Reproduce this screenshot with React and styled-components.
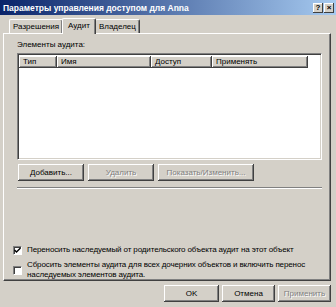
import React from 'react'
import styled, { createGlobalStyle } from 'styled-components'

const Global = createGlobalStyle`
  html, body {
    margin: 0;
    padding: 0;
    background: #d4d0c8;
  }
  body {
    width: 336px;
    height: 307px;
    overflow: hidden;
    font-family: 'Liberation Sans', Arial, sans-serif;
    font-size: 8px;
    color: #000;
  }
`

const raised = `
  box-shadow: inset -1px -1px #404040, inset 1px 1px #fff,
    inset -2px -2px #808080, inset 2px 2px #d4d0c8;
`

const Window = styled.div`
  display: flex;
  flex-direction: column;
  width: 336px;
  height: 307px;
  background: #d4d0c8;
`

const TitleBar = styled.div`
  display: flex;
  align-items: center;
  height: 15px;
  padding: 0 2px 0 3px;
  background: linear-gradient(to right, #0a246a, #a6caf0);
  color: #fff;
  font-weight: bold;
  font-size: 8.5px;
`

const TitleText = styled.span`
  flex: 1;
  white-space: nowrap;
`

const TitleButtons = styled.div`
  display: flex;
  gap: 1px;
`

const TitleButton = styled.div`
  width: 10px;
  height: 10px;
  background: #d4d0c8;
  color: #000;
  font-size: 8px;
  font-weight: bold;
  line-height: 10px;
  text-align: center;
  box-shadow: inset -1px -1px #404040, inset 1px 1px #fff;
`

const TabRow = styled.div`
  display: flex;
  align-items: flex-end;
  height: 18px;
  padding-left: 9px;
`

const Tab = styled.div`
  position: relative;
  height: ${(p) => (p.active ? 15 : 13)}px;
  padding: 0 ${(p) => (p.active ? 5 : 3)}px;
  margin: 0 ${(p) => (p.active ? -1 : 0)}px;
  line-height: ${(p) => (p.active ? 14 : 13)}px;
  background: #d4d0c8;
  border-top: 1px solid #fff;
  border-left: 1px solid #fff;
  border-right: 1px solid #404040;
  box-shadow: inset -1px 0 #808080;
  border-radius: 2px 2px 0 0;
  z-index: ${(p) => (p.active ? 2 : 1)};
  margin-bottom: ${(p) => (p.active ? -1 : 0)}px;
  white-space: nowrap;
`

const Panel = styled.div`
  display: flex;
  flex-direction: column;
  height: 248px;
  margin: 0 5px 0 3px;
  padding: 5px 8px 0 13px;
  border-top: 1px solid #fff;
  border-left: 1px solid #fff;
  border-right: 1px solid #404040;
  border-bottom: 1px solid #404040;
  box-shadow: inset -1px -1px #808080;
  box-sizing: border-box;
`

const Label = styled.div`
  height: 12px;
  line-height: 12px;
  margin-bottom: 2px;
`

const ListBox = styled.div`
  height: 111px;
  background: #fff;
  border-top: 1px solid #808080;
  border-left: 1px solid #808080;
  border-right: 1px solid #fff;
  border-bottom: 1px solid #fff;
  box-shadow: inset 1px 1px #404040, inset -1px -1px #d4d0c8;
  padding: 2px 2px 2px 1px;
  box-sizing: border-box;
`

const Header = styled.div`
  display: flex;
  height: 12px;
`

const HeaderCell = styled.div`
  width: ${(p) => p.w}px;
  padding-left: 4px;
  line-height: 12px;
  background: #d4d0c8;
  box-sizing: border-box;
  white-space: nowrap;
  ${raised}
`

const ButtonRow = styled.div`
  display: flex;
  gap: 4px;
  margin-top: 4px;
  padding-left: 1px;
`

const Button = styled.div`
  width: ${(p) => p.w}px;
  height: 17px;
  line-height: 17px;
  text-align: center;
  background: #d4d0c8;
  color: ${(p) => (p.disabled ? '#808080' : '#000')};
  text-shadow: ${(p) => (p.disabled ? '1px 1px #fff' : 'none')};
  white-space: nowrap;
  ${raised}
`

const Separator = styled.div`
  height: 0;
  margin-top: 6px;
  border-top: 1px solid #808080;
  border-bottom: 1px solid #fff;
`

const Checks = styled.div`
  display: flex;
  flex-direction: column;
  gap: 5px;
  margin-top: 56px;
  margin-left: -4px;
  letter-spacing: -0.12px;
`

const CheckRow = styled.div`
  display: flex;
  align-items: center;
  gap: 5px;
`

const Box = styled.div`
  flex: none;
  width: 9px;
  height: 9px;
  background: #fff;
  border-top: 1px solid #808080;
  border-left: 1px solid #808080;
  border-right: 1px solid #fff;
  border-bottom: 1px solid #fff;
  box-shadow: inset 1px 1px #404040;
  box-sizing: border-box;
  display: flex;
  align-items: center;
  justify-content: center;
`

const CheckText = styled.div`
  line-height: 10px;
`

const Footer = styled.div`
  display: flex;
  justify-content: flex-end;
  gap: 3px;
  padding: 4px 5px 0 0;
`

const Check = () => (
  <svg width="7" height="7" viewBox="0 0 7 7">
    <path d="M0.5 3 L2.5 5 L6.5 1" stroke="#000" strokeWidth="1.4" fill="none" />
  </svg>
)

export default function App() {
  return (
    <Window>
      <Global />
      <TitleBar>
        <TitleText>Параметры управления доступом для Anna</TitleText>
        <TitleButtons>
          <TitleButton>?</TitleButton>
          <TitleButton>×</TitleButton>
        </TitleButtons>
      </TitleBar>
      <TabRow>
        <Tab>Разрешения</Tab>
        <Tab active>Аудит</Tab>
        <Tab>Владелец</Tab>
      </TabRow>
      <Panel>
        <Label>Элементы аудита:</Label>
        <ListBox>
          <Header>
            <HeaderCell w={38}>Тип</HeaderCell>
            <HeaderCell w={94}>Имя</HeaderCell>
            <HeaderCell w={61}>Доступ</HeaderCell>
            <HeaderCell w={96}>Применять</HeaderCell>
          </Header>
        </ListBox>
        <ButtonRow>
          <Button w={66}>Добавить...</Button>
          <Button w={66} disabled>
            Удалить
          </Button>
          <Button w={96} disabled>
            Показать/Изменить...
          </Button>
        </ButtonRow>
        <Separator />
        <Checks>
          <CheckRow>
            <Box>
              <Check />
            </Box>
            <CheckText>Переносить наследуемый от родительского объекта аудит на этот объект</CheckText>
          </CheckRow>
          <CheckRow>
            <Box />
            <CheckText>
              Сбросить элементы аудита для всех дочерних объектов и включить перенос
              <br />
              наследуемых элементов аудита.
            </CheckText>
          </CheckRow>
        </Checks>
      </Panel>
      <Footer>
        <Button w={55}>OK</Button>
        <Button w={53}>Отмена</Button>
        <Button w={53} disabled>
          Применить
        </Button>
      </Footer>
    </Window>
  )
}
